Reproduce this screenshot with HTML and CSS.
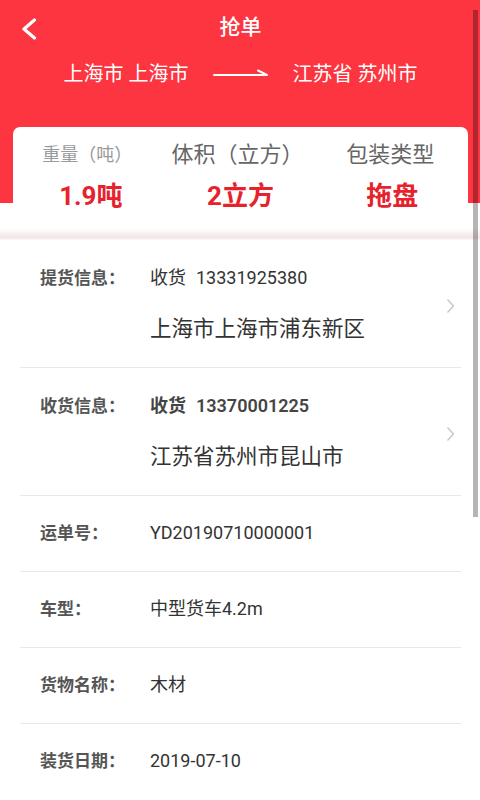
FILE: index.html
```html
<!DOCTYPE html>
<html lang="zh-CN">
<head>
<meta charset="utf-8">
<title>抢单</title>
<link rel="stylesheet" href="styles.css">
</head>
<body>
<div class="page">
  <div class="top">
    <div class="nav">
      <svg class="back" width="16" height="22" viewBox="0 0 16 22"><polyline points="13.5,2 3,11 13.5,20" fill="none" stroke="#fff" stroke-width="3.2" stroke-linecap="round" stroke-linejoin="round"/></svg>
      <div class="title">抢单</div>
    </div>
    <div class="route">
      <span>上海市 上海市</span>
      <svg class="arrow" width="56" height="10" viewBox="0 0 56 10"><path d="M1 7H54L45 2.5" fill="none" stroke="#fff" stroke-width="2" stroke-linecap="round" stroke-linejoin="round"/></svg>
      <span>江苏省 苏州市</span>
    </div>
    <div class="card">
      <div class="stat"><div class="stat-label s1">重量（吨）</div><div class="stat-value v1">1.9吨</div></div>
      <div class="stat"><div class="stat-label s2">体积（立方）</div><div class="stat-value">2立方</div></div>
      <div class="stat"><div class="stat-label s3">包装类型</div><div class="stat-value">拖盘</div></div>
    </div>
  </div>
  <div class="list">
    <div class="row double">
      <div class="label">提货信息：</div>
      <div class="value">
        <div class="line1">收货<span class="phone">13331925380</span></div>
        <div class="line2">上海市上海市浦东新区</div>
      </div>
      <svg class="chev" width="9" height="16" viewBox="0 0 9 16"><polyline points="1.5,1.5 7.5,8 1.5,14.5" fill="none" stroke="#c4c4c4" stroke-width="1.3"/></svg>
    </div>
    <div class="row double">
      <div class="label">收货信息：</div>
      <div class="value">
        <div class="line1 strong">收货<span class="phone">13370001225</span></div>
        <div class="line2">江苏省苏州市昆山市</div>
      </div>
      <svg class="chev" width="9" height="16" viewBox="0 0 9 16"><polyline points="1.5,1.5 7.5,8 1.5,14.5" fill="none" stroke="#c4c4c4" stroke-width="1.3"/></svg>
    </div>
    <div class="row">
      <div class="label">运单号：</div>
      <div class="value"><div class="line1">YD20190710000001</div></div>
    </div>
    <div class="row">
      <div class="label">车型：</div>
      <div class="value"><div class="line1">中型货车4.2m</div></div>
    </div>
    <div class="row">
      <div class="label">货物名称：</div>
      <div class="value"><div class="line1">木材</div></div>
    </div>
    <div class="row last">
      <div class="label">装货日期：</div>
      <div class="value"><div class="line1">2019-07-10</div></div>
    </div>
  </div>
  <div class="scrollbar"></div>
</div>
</body>
</html>
```

FILE: styles.css
```css
* { box-sizing: border-box; }
html, body { margin: 0; padding: 0; }
body {
  background: #fff;
  font-family: Roboto, "Noto Sans CJK SC", "Noto Sans", sans-serif;
  color: #333;
  width: 480px;
  height: 800px;
  overflow: hidden;
}
.page { position: relative; width: 480px; height: 800px; }

.top {
  background: linear-gradient(to bottom, #fc3541 0, #fc3541 203px, #fff 203px, #fff 228px, #f3e4e6 238px, #fff 240px);
  padding: 0 12px 12px 13px;
  height: 240px;
}
.nav {
  height: 54px;
  display: flex;
  align-items: center;
  justify-content: center;
  position: relative;
}
.back { position: absolute; left: 8px; top: 18px; }
.title {
  color: #fff;
  font-size: 21px;
  font-weight: 500;
  line-height: 28px;
  margin-top: -1px;
}
.route {
  display: flex;
  justify-content: center;
  align-items: center;
  gap: 24px;
  color: #fff;
  font-size: 20px;
  line-height: 26px;
  height: 38px;
  padding-top: 1px;
}
.route .arrow { margin-top: -1px; }
.card {
  margin-top: 35px;
  background: #fff;
  border-radius: 7px 7px 0 0;
  display: grid;
  grid-template-columns: 1fr 1fr 1fr;
  padding: 14px 0 17px;
}
.stat { text-align: center; }
.stat-label { line-height: 28px; height: 28px; }
.s1 { font-size: 18px; color: #9a9a9a; margin-left: -3px; }
.s2 { font-size: 22px; color: #666; margin-left: -6px; }
.s3 { font-size: 22px; color: #666; margin-left: -4px; }
.stat-value {
  margin-top: 12px;
  font-size: 26px;
  line-height: 30px;
  font-weight: 700;
  color: #e6222c;
}
.v1 { margin-left: 4px; }

.list { padding: 0 19px 0 20px; }
.row {
  display: flex;
  align-items: flex-start;
  padding: 24px 0 25px 20px;
  border-bottom: 1px solid #e8e8e8;
  position: relative;
}
.row.double { padding: 25px 0 25px 20px; align-items: center; }
.row.double .label { align-self: flex-start; }
.row.last { border-bottom: none; }
.label {
  width: 110px;
  flex: none;
  font-size: 17px;
  line-height: 26px;
  color: #555;
  font-weight: 600;
}
.value { flex: 1; color: #333; }
.line1 { font-size: 18px; line-height: 26px; }
.line1.strong { font-weight: 600; color: #444; }
.phone { margin-left: 10px; }
.line2 { font-size: 21.5px; line-height: 26px; margin-top: 25px; }
.chev { flex: none; margin-right: 6px; margin-top: 4px; }

.scrollbar {
  position: absolute;
  left: 473px;
  top: 10px;
  width: 5px;
  height: 507px;
  background: rgba(0, 0, 0, 0.29);
}
```
